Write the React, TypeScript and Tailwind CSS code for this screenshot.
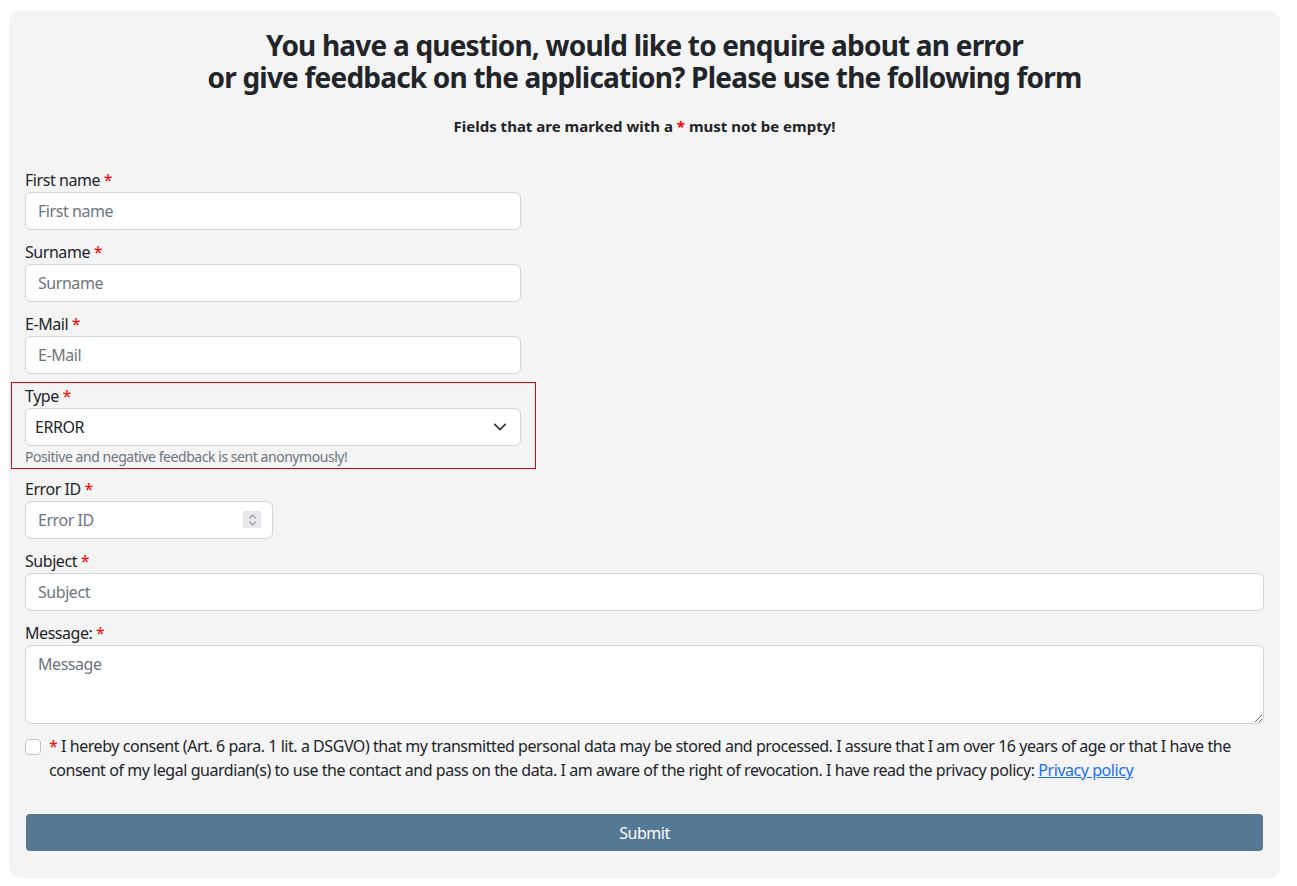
import React from 'react'

const font = { fontFamily: '"Segoe UI", "Noto Sans", "Liberation Sans", sans-serif' }

const Req = () => <span className="text-[#ff0000]">*</span>

const Field = ({ label, placeholder, wide = false, className = '' }: { label: string; placeholder: string; wide?: boolean; className?: string }) => (
  <div className={className}>
    <label className="block text-base leading-6 text-[#212529]">
      {label} <Req />
    </label>
    <input
      type="text"
      placeholder={placeholder}
      className={`${wide ? 'w-full' : 'w-[496px]'} h-[38px] rounded-[6px] border border-[#ced4da] bg-white px-3 text-base text-[#212529] placeholder:text-[#6c757d] outline-none`}
    />
  </div>
)

export default function App() {
  return (
    <div className="min-h-screen bg-white pt-[11px] pl-[9px] tracking-[-0.45px]" style={font}>
      <div className="w-[1271px] rounded-[10px] bg-[#f4f4f4] px-4 pt-4 pb-[27px] text-[#212529]">
        <h3 className="mt-[2px] text-center text-[28px] font-bold leading-[32px] tracking-[-0.8px]">
          You have a question, would like to enquire about an error
          <br />
          or give feedback on the application? Please use the following form
        </h3>
        <p className="mt-[21px] text-center text-[15px] font-bold leading-6 tracking-normal">
          Fields that are marked with a <Req /> must not be empty!
        </p>

        <form className="mt-[30px]">
          <Field label="First name" placeholder="First name" className="mb-[10px]" />
          <Field label="Surname" placeholder="Surname" className="mb-[10px]" />
          <Field label="E-Mail" placeholder="E-Mail" className="mb-[8px]" />

          {/* Type selection with hint */}
          <div className="-ml-[14px] mb-[8px] w-[525px] border border-solid border-red-600 px-[13px] pt-[1px] pb-[1px]">
            <label className="block text-base leading-6">
              Type <Req />
            </label>
            <div className="relative w-[496px]">
              <div className="flex h-[38px] items-center rounded-[6px] border border-[#ced4da] bg-white pl-[9px] pr-3 text-base">
                ERROR
              </div>
              <svg className="absolute right-[14px] top-[12px] h-[14px] w-[14px] text-[#343a40]" viewBox="0 0 16 16" fill="none" stroke="currentColor" strokeWidth="2" strokeLinecap="round" strokeLinejoin="round">
                <path d="M2 5l6 6 6-6" />
              </svg>
            </div>
            <div className="text-[14px] leading-[21px] tracking-[-0.45px] text-[#6c757d]">
              Positive and negative feedback is sent anonymously!
            </div>
          </div>

          <div className="mb-[10px]">
            <label className="block text-base leading-6">
              Error ID <Req />
            </label>
            <div className="relative w-[248px]">
              <input
                type="text"
                placeholder="Error ID"
                className="h-[38px] w-full rounded-[6px] border border-[#ced4da] bg-white px-3 text-base placeholder:text-[#6c757d] outline-none"
              />
              <div className="absolute right-[12px] top-[10px] flex h-[17px] w-[18px] flex-col items-center justify-center bg-[#e9e9ed]">
                <svg className="h-[7px] w-[9px] text-[#8a8a8f]" viewBox="0 0 10 6" fill="none" stroke="currentColor" strokeWidth="1.2">
                  <path d="M1.5 5L5 1.5 8.5 5" />
                </svg>
                <svg className="h-[7px] w-[9px] text-[#8a8a8f]" viewBox="0 0 10 6" fill="none" stroke="currentColor" strokeWidth="1.2">
                  <path d="M1.5 1L5 4.5 8.5 1" />
                </svg>
              </div>
            </div>
          </div>

          <Field label="Subject" placeholder="Subject" wide className="mb-[10px]" />

          <div className="mb-[10px]">
            <label className="block text-base leading-6">
              Message: <Req />
            </label>
            <textarea
              placeholder="Message"
              className="block h-[79px] w-full rounded-[6px] border border-[#ced4da] bg-white px-3 py-[6px] text-base leading-6 placeholder:text-[#6c757d] outline-none"
            />
          </div>

          <div className="flex items-start">
            <span className="mt-[5px] h-[16px] w-[16px] shrink-0 rounded-[4px] border border-[#bfc4c9] bg-white" />
            <p className="ml-2 text-base leading-6">
              <Req /> I hereby consent (Art. 6 para. 1 lit. a DSGVO) that my transmitted personal data may be stored and processed. I assure that I am over 16 years of age or that I have the consent of my legal guardian(s) to use the contact and pass on the data. I am aware of the right of revocation. I have read the privacy policy:{' '}
              <a href="#" className="text-[#1a6ef5] underline">
                Privacy policy
              </a>
            </p>
          </div>

          <button
            type="button"
            className="mt-[32px] ml-px h-[37px] w-[1237px] rounded-[4px] bg-[#557893] text-base text-white"
          >
            Submit
          </button>
        </form>
      </div>
    </div>
  )
}
